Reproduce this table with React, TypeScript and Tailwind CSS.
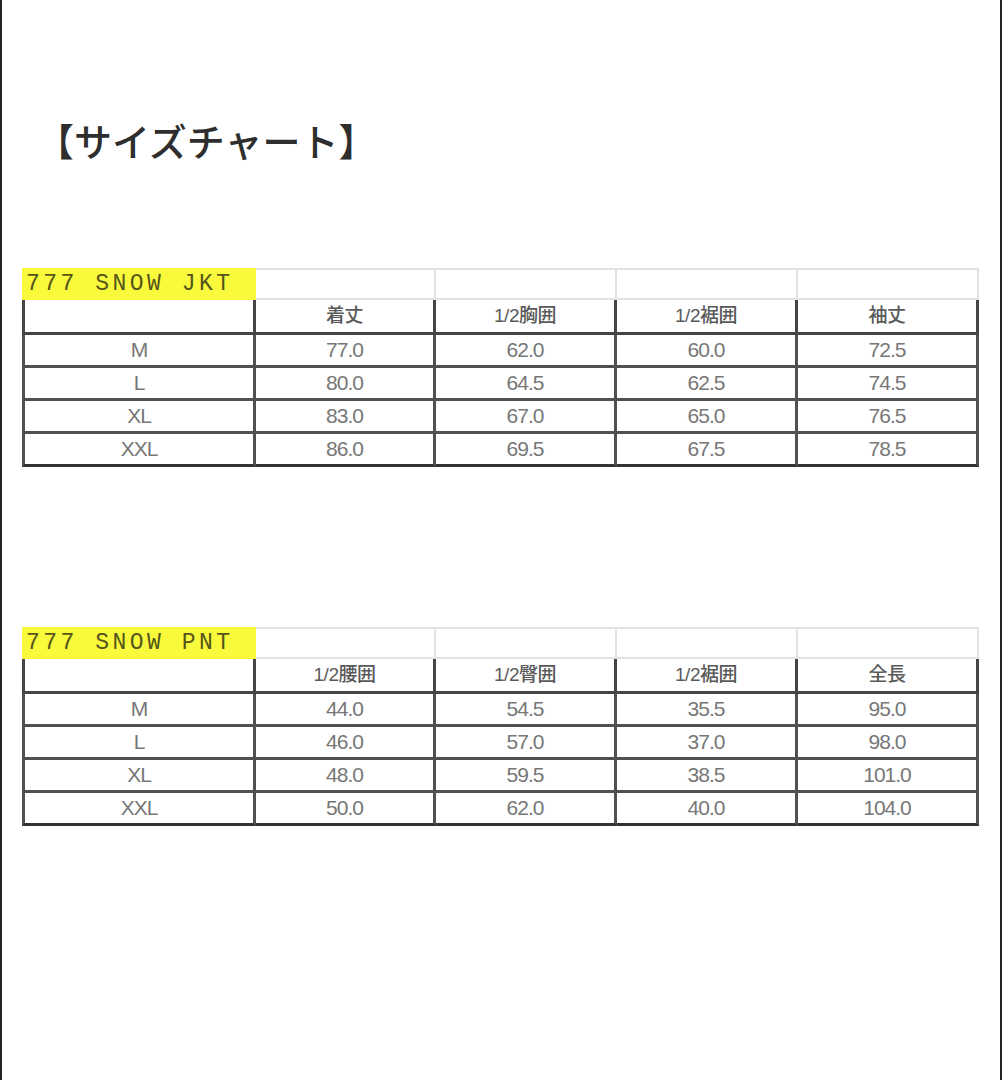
const COLS = ["w-[234px]", "w-[180px]", "w-[181px]", "w-[181px]", "w-[181px]"]

interface ChartProps {
  label: string
  headers: string[]
  rows: string[][]
}

function SizeChart({ label, headers, rows }: ChartProps) {
  return (
    <div className="flex flex-col ml-[20px]">
      <div className="flex h-[32px]">
        <div className="w-[234px] bg-[#fafa3c] flex items-center pl-[4px] font-['Liberation_Mono',monospace] text-[23px] tracking-[3.5px] text-[#55551a] leading-none">
          {label}
        </div>
        {[1, 2, 3, 4].map((i) => (
          <div
            key={i}
            className={`${COLS[i]} border-t-2 border-b-2 border-r-2 border-[#e2e2e2]`}
          />
        ))}
      </div>
      <div className="flex h-[35px]">
        <div className="w-[234px] border-l-[3px] border-r-[3px] border-b-[3px] border-[#454545]" />
        {headers.map((h, i) => (
          <div
            key={h + i}
            className={`${COLS[i + 1]} border-r-[3px] border-b-[3px] border-[#454545] flex items-center justify-center text-[19px] text-[#5a5a5a] font-medium tracking-[-0.5px]`}
          >
            {h}
          </div>
        ))}
      </div>
      {rows.map((r, ri) => (
        <div key={ri} className="flex h-[33px]">
          {r.map((v, i) => (
            <div
              key={i}
              className={`${COLS[i]} ${i === 0 ? "border-l-[3px]" : ""} border-r-[3px] ${
                ri === rows.length - 1 ? "border-b-[3px] border-b-[#333]" : "border-b-[3px]"
              } border-[#505050] flex items-center justify-center text-[21px] text-[#777] tracking-[-1px]`}
            >
              {v}
            </div>
          ))}
        </div>
      ))}
    </div>
  )
}

export default function App() {
  return (
    <div className="h-[1080px] w-[1002px] bg-white border-l-2 border-r-2 border-[#222] font-['Liberation_Sans','Noto_Sans_CJK_JP',sans-serif] flex flex-col">
      <div className="mt-[116px] ml-[34px] text-[38px] leading-[48px] font-medium text-[#2e2e2e] font-['Noto_Sans_CJK_JP',sans-serif]">
        【サイズチャート】
      </div>
      <div className="mt-[104px]">
        <SizeChart
          label="777 SNOW JKT"
          headers={["着丈", "1/2胸囲", "1/2裾囲", "袖丈"]}
          rows={[
            ["M", "77.0", "62.0", "60.0", "72.5"],
            ["L", "80.0", "64.5", "62.5", "74.5"],
            ["XL", "83.0", "67.0", "65.0", "76.5"],
            ["XXL", "86.0", "69.5", "67.5", "78.5"],
          ]}
        />
      </div>
      <div className="mt-[160px]">
        <SizeChart
          label="777 SNOW PNT"
          headers={["1/2腰囲", "1/2臀囲", "1/2裾囲", "全長"]}
          rows={[
            ["M", "44.0", "54.5", "35.5", "95.0"],
            ["L", "46.0", "57.0", "37.0", "98.0"],
            ["XL", "48.0", "59.5", "38.5", "101.0"],
            ["XXL", "50.0", "62.0", "40.0", "104.0"],
          ]}
        />
      </div>
    </div>
  )
}
